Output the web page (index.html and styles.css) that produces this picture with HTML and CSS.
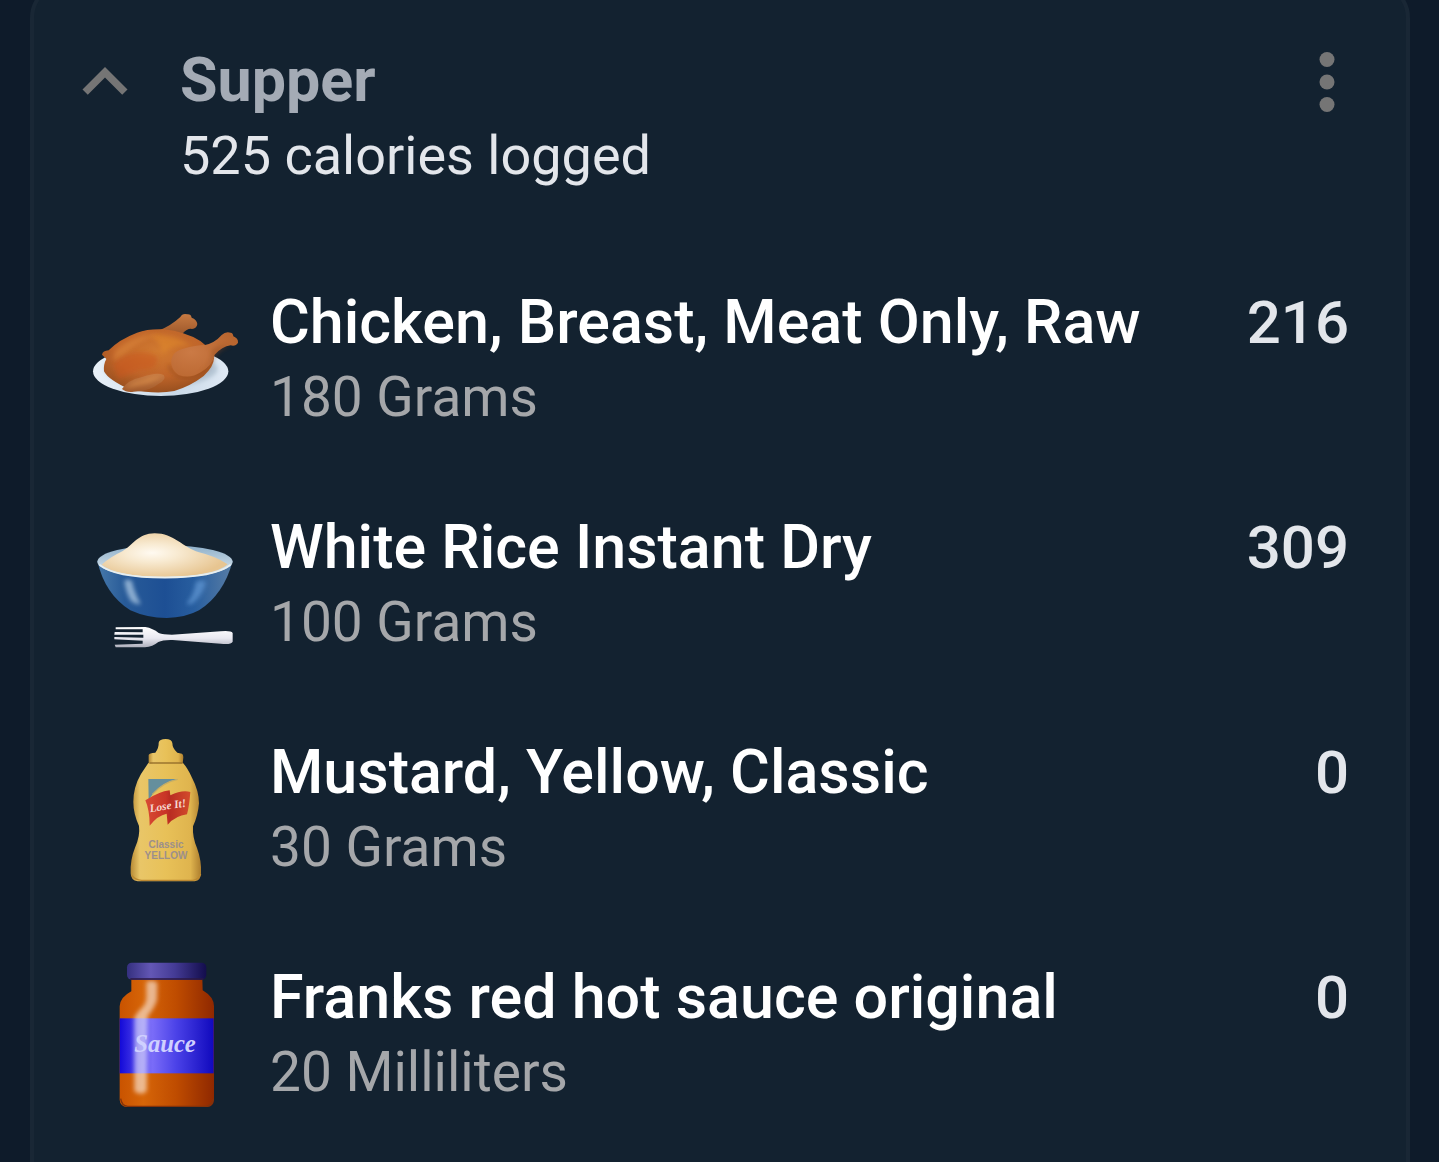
FILE: index.html
```html
<!DOCTYPE html>
<html lang="en">
<head>
    <meta charset="UTF-8">
    <meta name="viewport" content="width=device-width, initial-scale=1.0">
    <title>Supper</title>
    <link rel="stylesheet" href="styles.css">
</head>
<body>
    <section class="meal-card">
        <header class="meal-header">
            <button class="icon-btn" type="button" aria-label="Collapse">
                <svg viewBox="0 0 24 24"><path d="M12 8l-6 6 1.41 1.41L12 10.83l4.59 4.58L18 14z"/></svg>
            </button>
            <div class="meal-info">
                <h2 class="meal-name">Supper</h2>
                <p class="meal-total">525 calories logged</p>
            </div>
            <button class="icon-btn" type="button" aria-label="More options">
                <svg viewBox="0 0 24 24"><circle cx="12" cy="6" r="2"/><circle cx="12" cy="12" r="2"/><circle cx="12" cy="18" r="2"/></svg>
            </button>
        </header>

        <ul class="food-list">
            <li class="food">
                <!-- roast chicken -->
                <svg class="food-icon" viewBox="30 -45 450 450">
                    <defs>
                        <filter id="soft" x="-20%" y="-20%" width="140%" height="140%">
                            <feGaussianBlur stdDeviation="6"/>
                        </filter>
                        <linearGradient id="plate" x1="0" y1="0" x2="1" y2="0">
                            <stop offset="0" stop-color="#e9f1f8"/>
                            <stop offset=".6" stop-color="#c9d9e8"/>
                            <stop offset="1" stop-color="#dfe9f4"/>
                        </linearGradient>
                        <radialGradient id="bird" cx=".5" cy=".35" r=".65">
                            <stop offset="0" stop-color="#d17a30"/>
                            <stop offset=".6" stop-color="#c0652a"/>
                            <stop offset="1" stop-color="#99501f"/>
                        </radialGradient>
                        <radialGradient id="thigh" cx=".3" cy=".45" r=".7">
                            <stop offset="0" stop-color="#cb7a45"/>
                            <stop offset="1" stop-color="#b9662f"/>
                        </radialGradient>
                        <linearGradient id="leg" x1="0" y1="0" x2="0" y2="1">
                            <stop offset="0" stop-color="#c77a42"/>
                            <stop offset="1" stop-color="#a05a2c"/>
                        </linearGradient>
                    </defs>
                    <ellipse cx="242" cy="214" rx="203" ry="74" fill="url(#plate)"/>
                    <ellipse cx="244" cy="206" rx="168" ry="54" fill="#b4c4d3" filter="url(#soft)"/>
                    <path d="M235 92 Q272 78 301 51 Q307 39 322 43 Q333 42 335 53 Q350 58 352 72 Q350 86 336 87 Q323 84 307 101 Z" fill="url(#leg)"/>
                    <path d="M66 164 Q68 152 86 151 Q116 119 171 98 Q204 86 251 88 Q316 95 361 123 Q395 148 402 174 Q402 198 371 228 Q332 258 283 273 Q231 283 150 269 Q84 239 72 214 Q70 193 79 177 Z" fill="url(#bird)"/>
                    <path d="M108 150 Q165 103 239 104 Q190 114 151 147 Q128 171 99 182 Z" fill="#de8a3e" opacity=".5" filter="url(#soft)"/>
                    <path d="M235 104 Q285 106 333 137 Q277 131 247 163 Q246 125 208 108 Z" fill="#e28b2b" opacity=".5" filter="url(#soft)"/>
                    <path d="M100 195 Q155 139 229 167 Q242 210 179 209 Q141 225 116 237 Z" fill="#cb571f" opacity=".5" filter="url(#soft)"/>
                    <path d="M268 195 Q276 232 320 232 Q360 228 385 196" fill="none" stroke="#8d461b" stroke-width="8" opacity=".6" filter="url(#soft)"/>
                    <path d="M274 193 Q270 156 310 146 Q348 135 375 135 Q404 129 425 105 Q437 93 452 98 Q459 99 460 109 Q475 115 474 128 Q467 140 452 136 Q426 140 404 164 Q397 196 362 217 Q331 237 296 225 Q279 215 274 193 Z" fill="url(#thigh)"/>
                    <path d="M378 137 Q398 141 395 170 Q389 200 355 222 Q391 205 405 171 Q425 143 452 137 Q416 132 396 151" fill="#8d461b" opacity=".4" filter="url(#soft)"/>
                    <path d="M126 267 Q143 241 184 232 Q231 215 251 225 Q262 238 235 252 Q211 273 161 275 Q139 278 126 267 Z" fill="url(#leg)"/>
                    <path d="M137 264 Q156 245 188 239 Q226 223 243 230 Q230 240 206 249 Q170 257 137 264 Z" fill="#d88d4b" opacity=".7" filter="url(#soft)"/>
                </svg>
                <div class="food-info">
                    <h3 class="food-name">Chicken, Breast, Meat Only, Raw</h3>
                    <p class="food-amount">180 Grams</p>
                </div>
                <span class="food-calories">216</span>
            </li>
            <li class="food">
                <!-- bowl of rice and fork -->
                <svg class="food-icon" viewBox="30 -30 450 450">
                    <defs>
                        <linearGradient id="bowl" x1="0" y1="0" x2="1" y2="0">
                            <stop offset="0" stop-color="#4779ab"/>
                            <stop offset=".2" stop-color="#285b98"/>
                            <stop offset=".5" stop-color="#1d4f94"/>
                            <stop offset=".72" stop-color="#285e9f"/>
                            <stop offset="1" stop-color="#587da5"/>
                        </linearGradient>
                        <linearGradient id="rim" x1="0" y1="0" x2="0" y2="1">
                            <stop offset="0" stop-color="#8eb0ca"/>
                            <stop offset="1" stop-color="#e5edf1"/>
                        </linearGradient>
                        <radialGradient id="rice" cx=".4" cy=".45" r=".6">
                            <stop offset="0" stop-color="#fffaf1"/>
                            <stop offset=".35" stop-color="#f8ead1"/>
                            <stop offset="1" stop-color="#e7c591"/>
                        </radialGradient>
                        <linearGradient id="fork" x1="0" y1="0" x2="0" y2="1">
                            <stop offset="0" stop-color="#ffffff"/>
                            <stop offset=".55" stop-color="#e9e9f1"/>
                            <stop offset="1" stop-color="#aeb0bc"/>
                        </linearGradient>
                    </defs>
                    <path d="M52 123 Q75 223 151 271 Q201 294 260 294 Q317 293 357 271 Q431 224 458 123 Z" fill="url(#bowl)"/>
                    <path d="M133 183 Q143 174 156 184 Q162 217 182 252 Q169 256 153 243 Q137 216 133 183 Z" fill="#a5c2df" opacity=".8" filter="url(#soft)"/>
                    <path d="M347 188 Q363 175 378 187 Q370 221 342 247 Q327 259 320 250 Q343 223 347 188 Z" fill="#5c92cf" opacity=".8" filter="url(#soft)"/>
                    <ellipse cx="255" cy="125" rx="203" ry="49" fill="url(#rim)"/>
                    <path d="M65 134 Q91 111 127 94 C158 77 174 40 224 40 C282 40 309 83 357 97 Q405 108 443 133 Q404 169 255 170 Q107 169 65 134 Z" fill="url(#rice)"/>
                    <path d="M58 134 Q103 173 255 173 Q404 173 452 134" fill="none" stroke="#e8eff0" stroke-width="5"/>
                    <path d="M107 322 L196 321 Q219 325 236 339 Q249 344 276 344 L422 334 Q453 331 458 339 L458 365 Q453 375 422 371 L278 360 Q249 359 235 366 Q218 380 195 382 L107 382 L104 374 L188 371 L188 362 L103 358 L103 351 L190 353 L190 344 L103 344 L104 336 L188 337 L188 328 L107 328 Z" fill="url(#fork)"/>
                </svg>
                <div class="food-info">
                    <h3 class="food-name">White Rice Instant Dry</h3>
                    <p class="food-amount">100 Grams</p>
                </div>
                <span class="food-calories">309</span>
            </li>
            <li class="food">
                <!-- mustard bottle -->
                <svg class="food-icon" viewBox="-60 15 450 450">
                    <defs>
                        <linearGradient id="mustard" x1="0" y1="0" x2="1" y2="0">
                            <stop offset="0" stop-color="#b78a35"/>
                            <stop offset=".13" stop-color="#e9c668"/>
                            <stop offset=".5" stop-color="#e8c158"/>
                            <stop offset=".85" stop-color="#dfb44e"/>
                            <stop offset="1" stop-color="#ad7e2e"/>
                        </linearGradient>
                        <linearGradient id="flag" x1="0" y1="0" x2="1" y2="0">
                            <stop offset="0" stop-color="#d84a33"/>
                            <stop offset=".45" stop-color="#c93527"/>
                            <stop offset=".55" stop-color="#b92d22"/>
                            <stop offset="1" stop-color="#d34b2c"/>
                        </linearGradient>
                    </defs>
                    <path d="M115 99 L219 99 Q232 113 246 143 Q267 183 267 220 Q264 257 249 289 Q247 322 261 354 Q275 392 273 430 Q273 452 254 454 L83 454 Q62 451 62 430 Q60 390 75 353 Q91 318 87 288 Q70 250 70 216 Q70 171 93 132 Z" fill="url(#mustard)"/>
                    <path d="M116 75 Q117 69 136 68 Q147 53 146 38 Q148 27 167 27 Q185 27 187 39 Q187 55 202 68 L216 71 Q220 73 220 82 L218 101 L116 101 Z" fill="url(#mustard)"/>
                    <path d="M119 99 L217 99" stroke="#9b752e" stroke-width="4"/>
                    <path d="M66 436 Q75 450 95 451 L249 451 Q266 449 272 432" fill="none" stroke="#bd8931" stroke-width="4"/>
                    <path d="M115 147 L203 147 Q147 159 116 210 Z" fill="#658f9d"/>
                    <path d="M203 148 Q159 157 127 193" fill="none" stroke="#c6ae65" stroke-width="4"/>
                    <path d="M106 211 Q147 185 179 181 L181 196 Q216 179 241 186 Q238 227 231 253 Q197 257 173 284 L170 251 Q143 256 119 287 Q119 240 106 211 Z" fill="url(#flag)"/>
                    <text class="love-label" x="175" y="238" text-anchor="middle" transform="rotate(-9 175 238)">Lose It!</text>
                    <text class="mustard-label" x="168" y="355" text-anchor="middle">Classic</text>
                    <text class="mustard-label" x="168" y="387" text-anchor="middle">YELLOW</text>
                </svg>
                <div class="food-info">
                    <h3 class="food-name">Mustard, Yellow, Classic</h3>
                    <p class="food-amount">30 Grams</p>
                </div>
                <span class="food-calories">0</span>
            </li>
            <li class="food">
                <!-- sauce jar -->
                <svg class="food-icon" viewBox="-45 30 450 450">
                    <defs>
                        <linearGradient id="jar" x1="0" y1="0" x2="1" y2="0">
                            <stop offset="0" stop-color="#c95300"/>
                            <stop offset=".25" stop-color="#d66508"/>
                            <stop offset=".6" stop-color="#bf4c00"/>
                            <stop offset="1" stop-color="#8f2800"/>
                        </linearGradient>
                        <linearGradient id="label" x1="0" y1="0" x2="1" y2="0">
                            <stop offset="0" stop-color="#1209d8"/>
                            <stop offset=".35" stop-color="#7a6cf8"/>
                            <stop offset=".6" stop-color="#4b42e8"/>
                            <stop offset="1" stop-color="#1009bd"/>
                        </linearGradient>
                        <linearGradient id="lid" x1="0" y1="0" x2="1" y2="0">
                            <stop offset="0" stop-color="#35307f"/>
                            <stop offset=".3" stop-color="#6357b5"/>
                            <stop offset=".6" stop-color="#443b95"/>
                            <stop offset="1" stop-color="#130d4c"/>
                        </linearGradient>
                    </defs>
                    <path d="M79 85 L292 85 L293 121 Q327 141 327 169 L327 449 Q326 469 306 471 L67 471 Q45 469 44 449 L44 169 Q45 142 79 124 Z" fill="url(#jar)"/>
                    <rect x="44" y="205" width="282" height="165" fill="url(#label)"/>
                    <path d="M124 95 Q145 88 157 98 L156 149 Q149 174 128 197 L125 424 Q108 438 88 424 L88 204 Q93 190 114 170 Q125 157 124 137 Z" fill="#ffffff" opacity=".55" filter="url(#soft)"/>
                    <path d="M47 446 Q50 468 68 469 L304 469 Q323 466 325 446" fill="none" stroke="#83320a" stroke-width="4"/>
                    <rect x="66" y="38" width="238" height="51" rx="14" fill="url(#lid)"/>
                    <path d="M76 87 L295 87" stroke="#2b1844" stroke-width="5"/>
                    <text class="sauce-label" x="180" y="306" text-anchor="middle">Sauce</text>
                </svg>
                <div class="food-info">
                    <h3 class="food-name">Franks red hot sauce original</h3>
                    <p class="food-amount">20 Milliliters</p>
                </div>
                <span class="food-calories">0</span>
            </li>
        </ul>
    </section>
</body>
</html>
```
FILE: styles.css
```css
* {
    box-sizing: border-box;
}
body {
    margin: 0;
    background-color: #0e1b2a;
    font-family: Roboto, "Liberation Sans", sans-serif;
    color: #ffffff;
    overflow: hidden;
}
h2, h3, p, ul {
    margin: 0;
    padding: 0;
}

.meal-card {
    margin: -18px 29px 0 30px;
    min-height: calc(100vh + 60px);
    padding-top: 51px;
    background-color: #132230;
    border: 4px solid #192735;
    border-radius: 36px;
}
.meal-header {
    display: flex;
    align-items: flex-start;
    gap: 30px;
    padding: 0 34px 0 26px;
}
.icon-btn {
    flex: none;
    width: 90px;
    height: 90px;
    padding: 0;
    background: none;
    border: none;
    cursor: pointer;
}
.icon-btn svg {
    display: block;
    fill: #757575;
}
.meal-info {
    flex: 1;
    padding-top: 6px;
}
.meal-name {
    font-size: 61px;
    line-height: 75px;
    font-weight: 700;
    color: #a4abb5;
}
.meal-total {
    font-size: 54px;
    line-height: 75px;
    color: #e3e6eb;
}

.food-list {
    display: flex;
    flex-direction: column;
    gap: 75px;
    padding: 92px 57px 75px 56px;
    list-style: none;
}
.food {
    display: flex;
    gap: 30px;
}
.food-icon {
    flex: none;
    width: 150px;
    height: 150px;
}
.food-info {
    flex: 1;
}
.food-name {
    font-size: 61px;
    line-height: 75px;
    font-weight: 500;
}
.food-amount {
    font-size: 55px;
    line-height: 75px;
    color: #a5a7aa;
}
.food-calories {
    font-size: 60px;
    line-height: 75px;
    font-weight: 500;
    color: #e3e6eb;
}

.love-label {
    font: italic 700 34px "Liberation Serif", serif;
    fill: #f6d9d2;
}
.mustard-label {
    font: 700 30px "Liberation Sans", sans-serif;
    fill: #9c8f8c;
}
.sauce-label {
    font: italic 700 74px "Liberation Serif", serif;
    fill: #cfd0ff;
}
```
